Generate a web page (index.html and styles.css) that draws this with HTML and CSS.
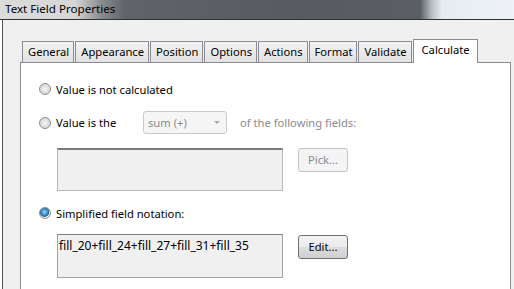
FILE: index.html
```html
<!DOCTYPE html>
<html>
<head>
<meta charset="utf-8">
<title>Text Field Properties</title>
<link rel="stylesheet" href="styles.css">
</head>
<body>
<div class="titlebar">Text Field Properties</div>
<div class="window">
  <div class="tabs">
    <div class="tab">General</div>
    <div class="tab">Appearance</div>
    <div class="tab">Position</div>
    <div class="tab">Options</div>
    <div class="tab">Actions</div>
    <div class="tab">Format</div>
    <div class="tab">Validate</div>
    <div class="tab active">Calculate</div>
  </div>
  <div class="panel">
    <div class="row row1">
      <span class="radio"></span>
      <span>Value is not calculated</span>
    </div>
    <div class="row row2">
      <span class="radio"></span>
      <span class="label">Value is the</span>
      <div class="select">
        <span>sum (+)</span>
        <span class="arrow"></span>
      </div>
      <span class="muted">of the following fields:</span>
    </div>
    <div class="fields">
      <div class="listbox"></div>
      <div class="button disabled">Pick...</div>
    </div>
    <div class="row row3">
      <span class="radio checked"></span>
      <span>Simplified field notation:</span>
    </div>
    <div class="fields notation">
      <div class="listbox textbox">fill_20+fill_24+fill_27+fill_31+fill_35</div>
      <div class="button">Edit...</div>
    </div>
  </div>
</div>
</body>
</html>
```

FILE: styles.css
```css
html, body {
  height: 100%;
}

body {
  margin: 0;
  background: #ffffff;
  font-family: "Noto Sans", sans-serif;
  font-size: 11.2px;
  color: #000;
  overflow: hidden;
}

.titlebar {
  height: 19px;
  line-height: 18px;
  padding-left: 5px;
  font-size: 11.6px;
  background: linear-gradient(to right, #dcdcdc 0px, #d6d6d6 75px, #8c8f92 100px, #606468 125px, #575b5f 300px, #5b5f64 420px, #b8c0c8 432px, #e6ecf1 442px, #eef2f6 514px);
  border-bottom: 1px solid #2e3236;
}

.window {
  margin-left: 2px;
  border-left: 1px solid #555;
  background: #f0f0f0;
  padding: 18px 3px 0 17px;
  height: calc(100% - 20px);
  box-sizing: border-box;
}

.tabs {
  display: flex;
  align-items: flex-end;
  padding-left: 2px;
  height: 24px;
  position: relative;
  z-index: 1;
}

.tab {
  height: 20px;
  line-height: 20px;
  padding: 0 4px 0 5px;
  margin-right: 1px;
  border: 1px solid #898c95;
  border-bottom: none;
  background: linear-gradient(#f2f2f2, #e2e2e2);
}

.tab.active {
  height: 23px;
  line-height: 20px;
  padding: 0 7px 0 8px;
  background: #fff;
  margin-bottom: -1px;
}

.panel {
  background: #fff;
  border: 1px solid #898c95;
  border-bottom: none;
  height: 228px;
  padding-left: 18px;
}

.row {
  display: flex;
  align-items: center;
}

.row1 {
  margin-top: 18px;
  height: 16px;
}

.row2 {
  margin-top: 14px;
  height: 23px;
}

.row3 {
  margin-top: 14px;
  height: 16px;
}

.radio {
  width: 10px;
  height: 10px;
  border: 1px solid #8e8f8f;
  border-radius: 50%;
  margin-right: 5px;
  background: radial-gradient(circle at 50% 50%, #f4f4f4 0, #dcdcdc 60%, #cfcfcf 100%);
  box-sizing: content-box;
}

.radio.checked {
  background: radial-gradient(circle at 45% 40%, #9fd4f4 0, #2b7fc0 45%, #1d5d93 55%, #f0f0f0 62%, #dedede 100%);
}

.label {
  width: 87px;
}

.select {
  width: 84px;
  height: 23px;
  border: 1px solid #cbcbcb;
  border-radius: 3px;
  background: #f5f5f5;
  color: #8a8a8a;
  display: flex;
  align-items: center;
  justify-content: space-between;
  padding: 0 6px 0 4px;
  box-sizing: border-box;
}

.arrow {
  width: 0;
  height: 0;
  border-left: 3px solid transparent;
  border-right: 3px solid transparent;
  border-top: 3px solid #a8a8a8;
}

.muted {
  color: #8a8a8a;
  margin-left: 13px;
}

.fields {
  display: flex;
  align-items: flex-start;
  margin-top: 14px;
  padding-left: 18px;
}

.notation {
  margin-top: 13px;
}

.listbox {
  width: 226px;
  height: 43px;
  box-sizing: border-box;
  background: #f0f0f0;
  border: 1px solid #b9b9b9;
  border-top: 2px solid #7b7b7b;
}

.textbox {
  height: 44px;
  border: 1px solid #a4a4a4;
  border-top-color: #7d7d7d;
  padding: 4px 0 0 1px;
  line-height: 14px;
  font-size: 12px;
}

.button {
  margin-left: 15px;
  width: 50px;
  height: 24px;
  box-sizing: border-box;
  border: 1px solid #707070;
  border-radius: 3px;
  background: linear-gradient(#f2f2f2 0, #ebebeb 50%, #dddddd 51%, #cfcfcf 100%);
  text-align: center;
  line-height: 21px;
}

.notation .button {
  margin-top: 1px;
}

.button.disabled {
  border-color: #c4c4c4;
  background: #f4f4f4;
  color: #8a8a8a;
}
```
